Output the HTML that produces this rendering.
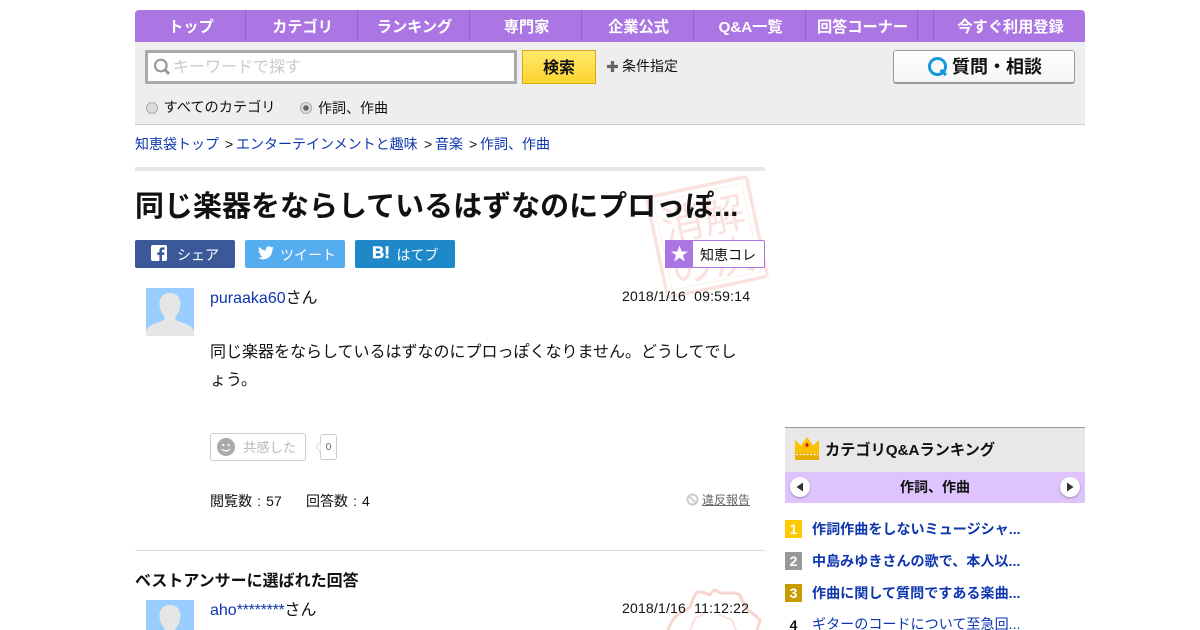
<!DOCTYPE html>
<html lang="ja"><head><meta charset="utf-8"><title>同じ楽器をならしているはずなのにプロっぽ...</title>
<style>
*{box-sizing:border-box}
html,body{margin:0;padding:0;width:1200px;height:630px;overflow:hidden;background:#fff}
body{font-family:"Liberation Sans","Noto Sans CJK JP",sans-serif;color:#111;position:relative}
.a{position:absolute;white-space:nowrap}
a{color:#0d36ae;text-decoration:none}
.nav{position:absolute;left:135px;top:10px;width:950px;height:32px;background:#ab76e3;border-radius:4px 4px 0 0}
.nav span{position:absolute;top:0;height:31px;line-height:36px;padding-left:2px;color:#fff;font-weight:bold;font-size:15.2px;text-align:center;border-right:1px solid #9560cf}
.sb{position:absolute;top:240px;height:28px;width:100px;border-radius:2px;color:#fff;font-size:14px;line-height:30px}
.rk{position:absolute;left:785px;width:17px;height:18px;color:#fff;font-weight:bold;font-size:14px;line-height:18px;text-align:center}
.rl{position:absolute;left:812px;font-size:14.08px;font-weight:bold;white-space:nowrap}
.bc{position:absolute;top:134px;font-size:14px;line-height:21px;white-space:nowrap}
.c{display:inline-block;width:14px;text-align:center}
</style></head><body>

<div class="nav">
<span style="left:0;width:111px">トップ</span>
<span style="left:111px;width:112px">カテゴリ</span>
<span style="left:223px;width:112px">ランキング</span>
<span style="left:335px;width:112px">専門家</span>
<span style="left:447px;width:112px">企業公式</span>
<span style="left:559px;width:112px">Q&amp;A一覧</span>
<span style="left:671px;width:112px">回答コーナー</span>
<span style="left:783px;width:16px;padding:0"></span>
<span style="left:799px;width:151px;border:0">今すぐ利用登録</span>
</div>

<div class="a" style="left:135px;top:42px;width:950px;height:83px;background:#eee;border-bottom:1px solid #ccc"></div>
<div class="a" style="left:145px;top:50px;width:372px;height:34px;background:#fff;border:3px solid #aaa"></div>
<svg class="a" style="left:153px;top:58px" width="18" height="18" viewBox="0 0 18 18"><circle cx="7.800" cy="7.500" r="5.800" fill="none" stroke="#999" stroke-width="2.200"/><path d="M11.800 11.500L16 16" stroke="#999" stroke-width="2.800"/></svg>
<div class="a" style="left:173px;top:56px;font-size:16px;line-height:24px;color:#c9c9c9">キーワードで探す</div>
<div class="a" style="left:522px;top:50px;width:74px;height:34px;background:linear-gradient(#ffe96b,#fdd42f);border:1px solid #d6ab12;text-align:center;font-weight:bold;font-size:16px;line-height:34px;padding-top:1px">検索</div>
<svg class="a" style="left:606px;top:60px" width="13" height="13"><path d="M6.500 1v11M1 6.500h11" stroke="#666" stroke-width="3.200"/></svg>
<div class="a" style="left:622px;top:56px;font-size:14px;line-height:21px">条件指定</div>
<div class="a" style="left:893px;top:50px;width:182px;height:34px;background:linear-gradient(#fff,#f6f6f6);border:1px solid #999;border-bottom-width:2px;border-radius:3px"></div>
<svg class="a" style="left:927px;top:56px" width="22" height="22" viewBox="0 0 22 22"><circle cx="10.500" cy="10.500" r="8" fill="none" stroke="#1297e0" stroke-width="3"/><path d="M13.500 14l5.500 5" stroke="#1297e0" stroke-width="3"/></svg>
<div class="a" style="left:952px;top:54px;font-size:18px;line-height:26px;font-weight:bold">質問・相談</div>

<div class="a" style="left:146px;top:102px;width:12px;height:12px;border-radius:50%;background:#ddd;border:1px solid #aaa"></div>
<div class="a" style="left:163.500px;top:98px;font-size:14.200px;line-height:21px">すべてのカテゴリ</div>
<div class="a" style="left:300px;top:102px;width:12px;height:12px;border-radius:50%;background:radial-gradient(circle,#666 0 2.500px,#ddd 3px);border:1px solid #aaa"></div>
<div class="a" style="left:318px;top:98px;font-size:14px;line-height:21px">作詞、作曲</div>

<a class="bc" href="#" style="left:135px">知恵袋トップ</a>
<span class="bc" style="left:225px">&gt;</span>
<a class="bc" href="#" style="left:236px">エンターテインメントと趣味</a>
<span class="bc" style="left:424px">&gt;</span>
<a class="bc" href="#" style="left:435px">音楽</a>
<span class="bc" style="left:469px">&gt;</span>
<a class="bc" href="#" style="left:480px">作詞、作曲</a>
<div class="a" style="left:135px;top:167px;width:630px;height:4px;background:#e6e6e6"></div>

<svg class="a" style="left:642px;top:172px" width="130" height="130" viewBox="0 0 130 130"><g transform="rotate(-12 65 65)" opacity=".42"><rect x="14" y="14" width="102" height="102" rx="3" fill="none" stroke="#f4bdb5" stroke-width="3.500"/><rect x="20" y="20" width="90" height="90" fill="none" stroke="#f8dcd8" stroke-width="1"/><text x="23" y="62" font-size="42" fill="#f4bdb5" font-family="Noto Sans CJK JP,sans-serif">消解</text><text x="23" y="105" font-size="42" fill="#f4bdb5" font-family="Noto Sans CJK JP,sans-serif">の決</text></g></svg>

<div class="a" style="left:135px;top:186px;font-size:29px;line-height:42px;font-weight:bold">同じ楽器をならしているはずなのにプロっぽ...</div>

<div class="sb" style="left:135px;background:#3b5998"><svg class="a" style="left:16px;top:5px" width="16" height="16"><rect width="16" height="16" rx="2" fill="#fff"/><path d="M11 16V10h2l.4-2.600H11V6c0-.8.3-1.200 1.200-1.200h1.300V2.500c-.4 0-1.100-.1-1.900-.1-2 0-3.200 1.200-3.200 3.300v1.700H6.300V10h2.100v6z" fill="#3b5998"/></svg><span class="a" style="left:42px">シェア</span></div>
<div class="sb" style="left:245px;background:#55acee"><svg class="a" style="left:13px;top:6px" width="16" height="14" viewBox="0 0 24 20"><path d="M24 2.400a10 10 0 0 1-2.800.8A5 5 0 0 0 23.300.5a10 10 0 0 1-3.100 1.200 4.900 4.900 0 0 0-8.400 4.500A14 14 0 0 1 1.700.9a4.900 4.900 0 0 0 1.500 6.600 5 5 0 0 1-2.200-.6 4.900 4.900 0 0 0 3.900 4.900 5 5 0 0 1-2.200.1 4.900 4.900 0 0 0 4.600 3.400A10 10 0 0 1 0 17.300 14 14 0 0 0 7.500 19.500c9.100 0 14-7.500 14-14v-.6A10 10 0 0 0 24 2.400z" fill="#fff"/></svg><span class="a" style="left:35px">ツイート</span></div>
<div class="sb" style="left:355px;background:#1e88c9"><span class="a" style="left:17px;top:-2px;font-size:17px;font-weight:bold;-webkit-text-stroke:.4px #fff">B!</span><span class="a" style="left:41.500px">はてブ</span></div>

<div class="a" style="left:665px;top:240px;width:100px;height:28px;background:#fff;border:1px solid #ab76e3;border-radius:2px"></div>
<svg class="a" style="left:665px;top:240px" width="28" height="28"><rect width="28" height="28" fill="#ab76e3"/><path d="M14.500 5.500l2.200 6h6.300l-5.100 3.800 1.900 6.200-5.300-3.800-5.300 3.800 1.900-6.200L6 11.500h6.300z" fill="#fff"/></svg>
<div class="a" style="left:700px;top:245px;font-size:14px;line-height:21px">知恵コレ</div>

<svg class="a" style="left:146px;top:288px" width="48" height="48" viewBox="0 0 48 48"><rect width="48" height="48" fill="#99ccff"/><path d="M24 5c7 0 10.500 4.500 10.500 11 0 6-3 10.500-5 12.500v3c2 2.500 16 4 18.500 11.500v5H0v-5c2.500-7.500 16.500-9 18.500-11.500v-3c-2-2-5-6.500-5-12.500C13.500 9.500 17 5 24 5z" fill="#e6e6e6"/></svg>
<div class="a" style="left:210px;top:287px;font-size:16px;line-height:24px"><a href="#">puraaka60</a>さん</div>
<div class="a" style="left:622px;top:286px;font-size:14px;letter-spacing:.19px;line-height:21px;white-space:pre">2018/1/16  09:59:14</div>
<div class="a" style="left:210px;top:339px;width:540px;white-space:normal;font-size:16px;line-height:28px">同じ楽器をならしているはずなのにプロっぽくなりません。どうしてでしょう。</div>

<div class="a" style="left:210px;top:433px;width:96px;height:28px;border:1px solid #ccc;border-radius:3px"></div>
<div class="a" style="left:217px;top:438px;width:18px;height:18px;border-radius:50%;background:#aaa"></div>
<svg class="a" style="left:217px;top:438px" width="18" height="18"><circle cx="6.300" cy="7" r="1.100" fill="#fff"/><circle cx="11.700" cy="7" r="1.100" fill="#fff"/><path d="M5 11c2 2.500 6 2.500 8 0" fill="none" stroke="#fff" stroke-width="1.200"/></svg>
<div class="a" style="left:243px;top:437px;font-size:13.300px;line-height:21px;color:#bbb">共感した</div>
<div class="a" style="left:320px;top:434px;width:17px;height:26px;border:1px solid #ccc;border-radius:3px;text-align:center;font-size:10px;line-height:25px;color:#666">0</div>
<svg class="a" style="left:315px;top:441px" width="6" height="12"><path d="M5.500 1L1 6l4.500 5" fill="#fff" stroke="#ddd"/></svg>

<div class="a" style="left:210px;top:491px;font-size:14px;line-height:21px;letter-spacing:.05px">閲覧数<span class="c">:</span>57</div>
<div class="a" style="left:306px;top:491px;font-size:14px;line-height:21px">回答数<span class="c">:</span>4</div>
<svg class="a" style="left:686px;top:493px" width="13" height="13"><circle cx="6.500" cy="6.500" r="5" fill="none" stroke="#ccc" stroke-width="2"/><path d="M3 3l7 7" stroke="#ccc" stroke-width="2"/></svg>
<div class="a" style="left:702px;top:491px;font-size:12px;line-height:18px;color:#666;text-decoration:underline">違反報告</div>

<div class="a" style="left:135px;top:550px;width:630px;height:1px;background:#ddd"></div>
<div class="a" style="left:135px;top:570px;font-size:16px;line-height:24px;font-weight:bold">ベストアンサーに選ばれた回答</div>

<svg class="a" style="left:660px;top:580px" width="110" height="50" viewBox="0 0 110 50"><path d="M8 50Q12 38 20 33Q26 30 30 27Q33 18 37 12Q44 12 50 15Q52 11 55 10Q61 14 67 13Q74 12 80 15Q83 24 88 30Q94 34 100 40Q99 45 97 50" fill="none" stroke="#f8d5cf" stroke-width="3" stroke-linejoin="round"/><path d="M30 50l5-12 10-4M58 34l14 6 4 10" fill="none" stroke="#fae2de" stroke-width="2"/></svg>

<svg class="a" style="left:146px;top:600px" width="48" height="30" viewBox="0 0 48 30"><rect width="48" height="30" fill="#99ccff"/><path d="M24 5c7 0 10.500 4.500 10.500 11 0 6-3 10.500-5 12.500V30h-11v-1.500c-2-2-5-6.500-5-12.500C13.500 9.500 17 5 24 5z" fill="#e6e6e6"/></svg>
<div class="a" style="left:210px;top:599px;font-size:16px;line-height:24px"><a href="#">aho<span style="letter-spacing:-.25px">********</span></a>さん</div>
<div class="a" style="left:622px;top:598px;font-size:14px;letter-spacing:.19px;line-height:21px;white-space:pre">2018/1/16  11:12:22</div>

<div class="a" style="left:785px;top:427px;width:300px;height:46px;background:#e8e8e8;border-top:1px solid #999"></div>
<svg class="a" style="left:795px;top:436px" width="24" height="24" viewBox="0 0 24 24"><path d="M0 4l6 5.500L12 1l6 8.500L24 4v13H0z" fill="#f9c300"/><path d="M12 6.500l2 2.500-2 2.500-2-2.500z" fill="#c8201a"/><rect y="17" width="24" height="7" fill="#e9ad00"/><path d="M1 18.500h22" stroke="#fff" stroke-width="1.200" stroke-dasharray="2 1.500"/></svg>
<div class="a" style="left:825px;top:440px;font-size:15.200px;line-height:22px;font-weight:bold">カテゴリQ&amp;Aランキング</div>
<div class="a" style="left:785px;top:472px;width:300px;height:31px;background:#dfc3fc"></div>
<div class="a" style="left:785px;top:476px;width:300px;text-align:center;font-size:14px;line-height:22px;font-weight:bold">作詞、作曲</div>
<svg class="a" style="left:789px;top:476px;filter:drop-shadow(0 1px 1px rgba(0,0,0,.3))" width="22" height="22"><circle cx="11" cy="11" r="10" fill="#fff"/><path d="M14 6.500v9L7.500 11z" fill="#333"/></svg>
<svg class="a" style="left:1059px;top:476px;filter:drop-shadow(0 1px 1px rgba(0,0,0,.3))" width="22" height="22"><circle cx="11" cy="11" r="10" fill="#fff"/><path d="M8 6.500v9l6.500-4.500z" fill="#333"/></svg>

<div class="rk" style="top:520px;background:#ffc800">1</div>
<a class="rl" href="#" style="top:519px;line-height:21px">作詞作曲をしないミュージシャ...</a>
<div class="rk" style="top:552px;background:#999">2</div>
<a class="rl" href="#" style="top:551px;line-height:21px">中島みゆきさんの歌で、本人以...</a>
<div class="rk" style="top:584px;background:#c89b00">3</div>
<a class="rl" href="#" style="top:583px;line-height:21px">作曲に関して質問ですある楽曲...</a>
<div class="rk" style="top:616px;color:#111">4</div>
<a class="rl" href="#" style="top:614px;line-height:21px;font-weight:normal">ギターのコードについて至急回...</a>
</body></html>
